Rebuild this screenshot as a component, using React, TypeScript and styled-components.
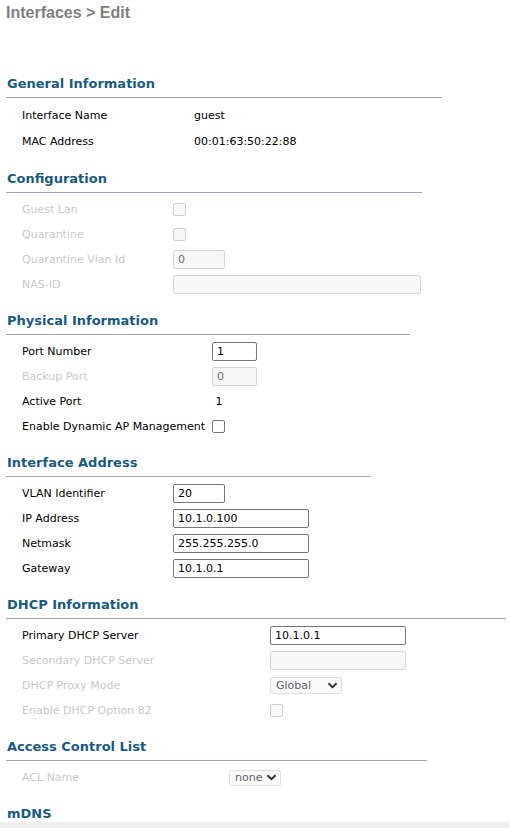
import React from "react";
import styled, { createGlobalStyle } from "styled-components";

const GlobalStyle = createGlobalStyle`
  html, body { margin: 0; padding: 0; background: #ffffff; }
  body {
    font-family: "DejaVu Sans", Verdana, sans-serif;
    font-size: 11px;
    color: #000000;
  }
`;

const Page = styled.div`
  display: flex;
  flex-direction: column;
  min-height: 828px;
`;

const Content = styled.div`
  padding: 4px 0 0 6px;
  display: flex;
  flex-direction: column;
`;

const Title = styled.h1`
  margin: 0 0 53px 0;
  font-family: "Liberation Sans", Arial, sans-serif;
  font-weight: bold;
  font-size: 16px;
  line-height: 18px;
  color: #7f7f7f;
`;

const Section = styled.section<{ $w: number; $gap?: number }>`
  width: ${(p) => p.$w}px;
  margin-bottom: ${(p) => p.$gap ?? 15}px;
`;

const SectionHeader = styled.h2<{ $noLine?: boolean }>`
  margin: 0;
  font-family: "DejaVu Sans", Verdana, sans-serif;
  font-weight: bold;
  font-size: 13px;
  line-height: 16px;
  color: #1b5b7c;
  padding: 1px 0 ${(p) => (p.$noLine ? 0 : 5)}px 1px;
  border-bottom: ${(p) => (p.$noLine ? "none" : "1px solid #9fa3b6")};
`;

const Rows = styled.div`
  display: flex;
  flex-direction: column;
  padding-top: 4px;
`;

const Row = styled.div<{ $h?: number }>`
  display: flex;
  align-items: center;
  height: ${(p) => p.$h ?? 25}px;
  padding-left: 16px;
`;

const Label = styled.div<{ $w: number; $off?: boolean }>`
  width: ${(p) => p.$w}px;
  flex: none;
  color: ${(p) => (p.$off ? "#c8c8c8" : "#000000")};
  white-space: nowrap;
`;

const Value = styled.div`
  color: #000000;
  white-space: nowrap;
`;

const TextInput = styled.input<{ $w: number }>`
  box-sizing: border-box;
  width: ${(p) => p.$w}px;
  height: 19px;
  margin: 0;
  padding: 0 4px;
  font-family: "DejaVu Sans", Verdana, sans-serif;
  font-size: 11px;
  color: #000000;
  background: #ffffff;
  border: 1px solid #767676;
  border-radius: 2px;
  outline: none;
  &:disabled {
    background: #f6f6f6;
    border-color: #d6d6d6;
    color: #6d6d7a;
  }
`;

const CheckBox = styled.input.attrs({ type: "checkbox" })`
  appearance: none;
  -webkit-appearance: none;
  box-sizing: border-box;
  width: 13px;
  height: 13px;
  margin: 0;
  border: 1px solid #767676;
  border-radius: 2px;
  background: #ffffff;
  &:disabled {
    background: #f6f6f6;
    border-color: #cfcfcf;
  }
`;

const SelectBox = styled.div<{ $w: number; $h: number }>`
  box-sizing: border-box;
  width: ${(p) => p.$w}px;
  height: ${(p) => p.$h}px;
  display: flex;
  align-items: center;
  justify-content: space-between;
  padding: 0 3px 0 5px;
  background: #fafafa;
  border: 1px solid #dedede;
  border-radius: 2px;
  color: #5e5e6e;
  font-size: 11px;
`;

const Footer = styled.div`
  flex: 1;
  background: #efefef;
`;

const Chevron = () => (
  <svg width="11" height="7" viewBox="0 0 11 7" aria-hidden="true">
    <polyline
      points="1.5,1.3 5.5,5.2 9.5,1.3"
      fill="none"
      stroke="#333333"
      strokeWidth="2"
      strokeLinejoin="miter"
    />
  </svg>
);

const Select = ({ w, h, value }: { w: number; h: number; value: string }) => (
  <SelectBox $w={w} $h={h}>
    <span>{value}</span>
    <Chevron />
  </SelectBox>
);

export default function App() {
  return (
    <Page>
      <GlobalStyle />
      <Content>
        <Title>Interfaces &gt; Edit</Title>

        <Section $w={436} $gap={16}>
          <SectionHeader>General Information</SectionHeader>
          <Rows>
            <Row $h={26}>
              <Label $w={172}>Interface Name</Label>
              <Value>guest</Value>
            </Row>
            <Row $h={26}>
              <Label $w={172}>MAC Address</Label>
              <Value>00:01:63:50:22:88</Value>
            </Row>
          </Rows>
        </Section>

        <Section $w={416}>
          <SectionHeader>Configuration</SectionHeader>
          <Rows>
            <Row>
              <Label $w={151} $off>Guest Lan</Label>
              <CheckBox disabled />
            </Row>
            <Row>
              <Label $w={151} $off>Quarantine</Label>
              <CheckBox disabled />
            </Row>
            <Row>
              <Label $w={151} $off>Quarantine Vlan Id</Label>
              <TextInput $w={52} disabled defaultValue="0" />
            </Row>
            <Row>
              <Label $w={151} $off>NAS-ID</Label>
              <TextInput $w={248} disabled defaultValue="" />
            </Row>
          </Rows>
        </Section>

        <Section $w={404}>
          <SectionHeader>Physical Information</SectionHeader>
          <Rows>
            <Row>
              <Label $w={190}>Port Number</Label>
              <TextInput $w={45} defaultValue="1" />
            </Row>
            <Row>
              <Label $w={190} $off>Backup Port</Label>
              <TextInput $w={45} disabled defaultValue="0" />
            </Row>
            <Row>
              <Label $w={190}>Active Port</Label>
              <Value>&nbsp;1</Value>
            </Row>
            <Row>
              <Label $w={190}>Enable Dynamic AP Management</Label>
              <CheckBox />
            </Row>
          </Rows>
        </Section>

        <Section $w={365}>
          <SectionHeader>Interface Address</SectionHeader>
          <Rows>
            <Row>
              <Label $w={151}>VLAN Identifier</Label>
              <TextInput $w={52} defaultValue="20" />
            </Row>
            <Row>
              <Label $w={151}>IP Address</Label>
              <TextInput $w={136} defaultValue="10.1.0.100" />
            </Row>
            <Row>
              <Label $w={151}>Netmask</Label>
              <TextInput $w={136} defaultValue="255.255.255.0" />
            </Row>
            <Row>
              <Label $w={151}>Gateway</Label>
              <TextInput $w={136} defaultValue="10.1.0.1" />
            </Row>
          </Rows>
        </Section>

        <Section $w={500}>
          <SectionHeader>DHCP Information</SectionHeader>
          <Rows>
            <Row>
              <Label $w={248}>Primary DHCP Server</Label>
              <TextInput $w={136} defaultValue="10.1.0.1" />
            </Row>
            <Row>
              <Label $w={248} $off>Secondary DHCP Server</Label>
              <TextInput $w={136} disabled defaultValue="" />
            </Row>
            <Row>
              <Label $w={248} $off>DHCP Proxy Mode</Label>
              <Select w={72} h={17} value="Global" />
            </Row>
            <Row>
              <Label $w={248} $off>Enable DHCP Option 82</Label>
              <CheckBox disabled />
            </Row>
          </Rows>
        </Section>

        <Section $w={421}>
          <SectionHeader>Access Control List</SectionHeader>
          <Rows>
            <Row>
              <Label $w={207} $off>ACL Name</Label>
              <Select w={52} h={16} value="none" />
            </Row>
          </Rows>
        </Section>

        <Section $w={421} $gap={0}>
          <SectionHeader $noLine>mDNS</SectionHeader>
        </Section>
      </Content>
      <Footer />
    </Page>
  );
}
